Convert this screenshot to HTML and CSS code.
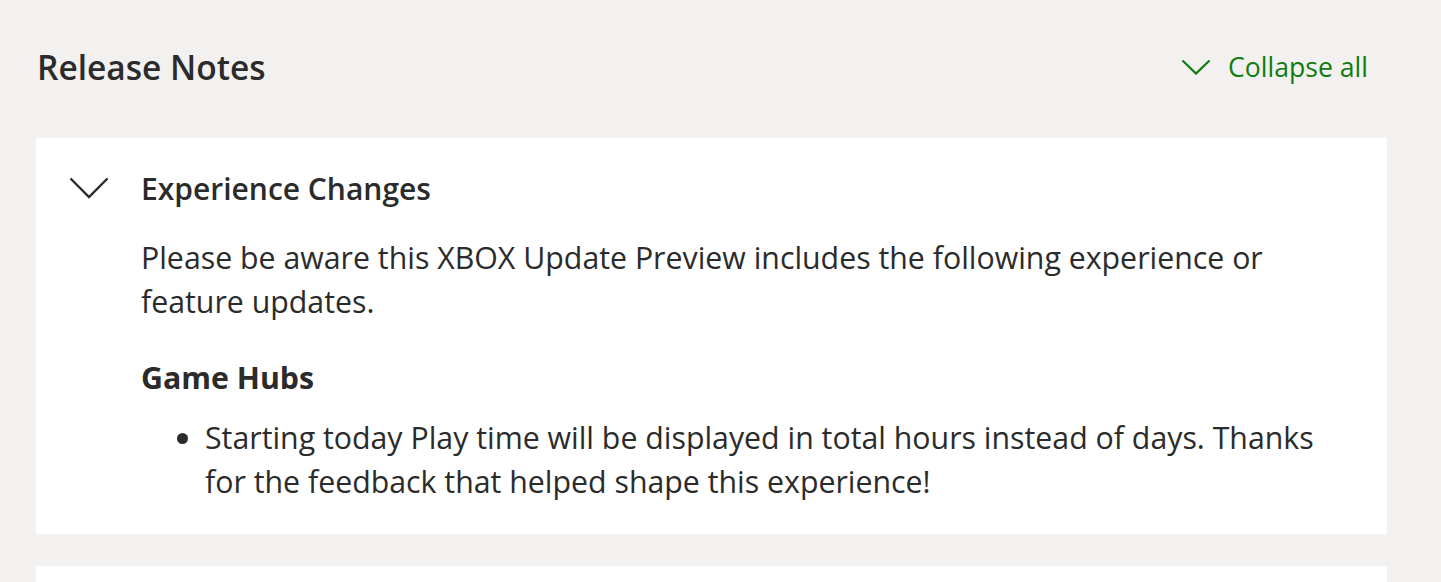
FILE: index.html
```html
<!DOCTYPE html>
<html lang="en">
<head>
<meta charset="utf-8">
<title>Release Notes</title>
<link rel="stylesheet" href="styles.css">
</head>
<body>
<main class="page">
  <header class="top">
    <h1 class="title">Release Notes</h1>
    <button class="collapse-all" type="button">
      <svg class="chev-sm" viewBox="0 0 30 16" width="30" height="16" aria-hidden="true"><path d="M1.5 1.5 L15 14.5 L28.5 1.5" fill="none" stroke="currentColor" stroke-width="2.3"/></svg>
      <span>Collapse all</span>
    </button>
  </header>
  <section class="card">
    <div class="card-head">
      <svg class="chev" viewBox="0 0 40 22" width="40" height="22" aria-hidden="true"><path d="M1.5 1.5 L20 20 L38.5 1.5" fill="none" stroke="currentColor" stroke-width="2.4"/></svg>
      <h2 class="card-title">Experience Changes</h2>
    </div>
    <div class="card-body">
      <p class="intro">Please be aware this XBOX Update Preview includes the following experience or feature updates.</p>
      <h3 class="sub">Game Hubs</h3>
      <ul class="list">
        <li>Starting today Play time will be displayed in total hours instead of days. Thanks for the feedback that helped shape this experience!</li>
      </ul>
    </div>
  </section>
  <section class="card card-next"></section>
</main>
</body>
</html>
```
FILE: styles.css
```css
html, body {
  margin: 0;
  padding: 0;
  background: #f2f1f0;
}
body {
  font-family: "Open Sans", "Noto Sans", sans-serif;
  color: #2b2b2b;
}
.page {
  padding: 0 54px 0 36px;
}
.top {
  height: 138px;
  box-sizing: border-box;
  padding-bottom: 4px;
  display: flex;
  align-items: center;
  justify-content: space-between;
}
.title {
  margin: 0;
  font-size: 33.5px;
  font-weight: 600;
  color: #2b2b2b;
  padding-left: 1px;
}
.collapse-all {
  display: flex;
  align-items: center;
  gap: 17px;
  background: none;
  border: 0;
  padding: 0 19px 0 0;
  font: inherit;
  font-size: 26.6px;
  color: #107c10;
  cursor: pointer;
}
.card {
  background: #fff;
  padding: 28px 60px 30px 33px;
}
.card-head {
  display: flex;
  align-items: center;
  gap: 32px;
  height: 44px;
  color: #2b2b2b;
}
.chev { flex: none; }
.card-title {
  margin: 0;
  font-size: 30px;
  font-weight: 600;
}
.card-body {
  padding-left: 72px;
  font-size: 30.3px;
  line-height: 44px;
}
.intro { margin: 26px 0 0; }
.sub {
  margin: 32px 0 0;
  font-size: 30.3px;
  font-weight: 700;
  line-height: 44px;
}
.list {
  margin: 16px 0 0;
  padding-left: 64px;
}
.card-next {
  margin-top: 32px;
  height: 40px;
  padding: 0;
}
```
